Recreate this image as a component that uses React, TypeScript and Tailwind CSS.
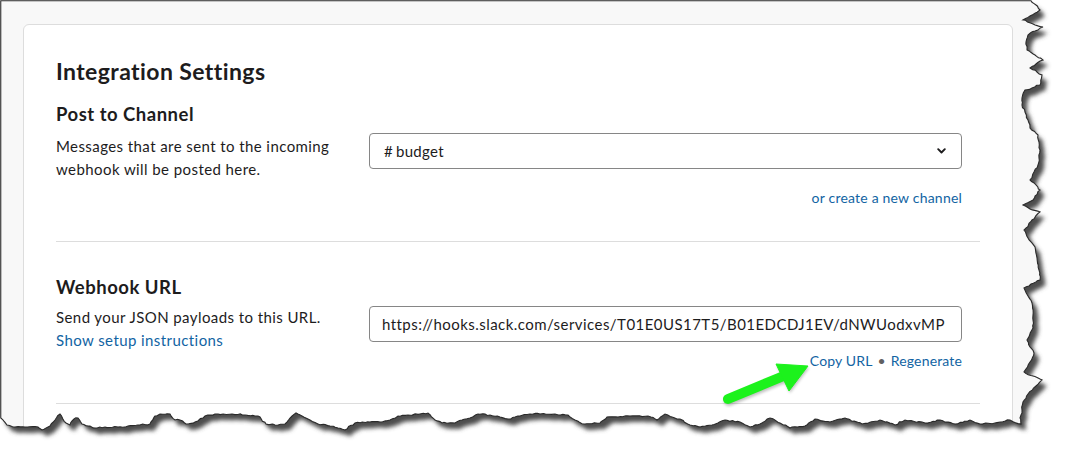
import React from 'react';

// right edge of the torn screenshot, top to bottom
const rightEdge: [number, number][] = [
  [1031, 0], [1036, 5], [1040, 10], [1030, 16], [1023, 20], [1033, 24], [1043, 27], [1035, 31],
  [1028, 35], [1026, 42], [1027, 50], [1035, 55], [1043, 60], [1036, 64], [1030, 68], [1037, 72],
  [1042, 75], [1040, 85], [1032, 88], [1025, 90], [1022, 98], [1022, 105], [1025, 112], [1028, 120],
  [1030, 128], [1038, 135], [1039, 142], [1040, 150], [1039, 158], [1038, 165], [1034, 172],
  [1030, 180], [1036, 185], [1040, 190], [1035, 196], [1033, 200], [1023, 205], [1030, 209],
  [1040, 212], [1032, 220], [1024, 230], [1028, 238], [1035, 247], [1037, 258], [1039, 270],
  [1040, 280], [1031, 284], [1024, 288], [1028, 296], [1032, 303], [1033, 315], [1033, 328],
  [1027, 340], [1030, 347], [1034, 353], [1030, 362], [1024, 372], [1033, 376], [1042, 380],
  [1036, 386], [1028, 394], [1023, 402], [1022, 410], [1020, 418], [1021, 424],
];

// bottom edge, right to left
const bottomEdge: [number, number][] = [
  [1010, 420], [995, 423], [980, 424], [970, 420], [955, 424], [940, 420], [925, 423], [905, 420],
  [895, 425], [880, 420], [862, 424], [845, 418], [830, 422], [815, 419], [805, 426], [790, 428],
  [780, 423], [770, 418], [760, 424], [750, 427], [740, 422], [725, 420], [712, 425], [700, 427],
  [690, 425], [680, 419], [672, 417], [665, 414], [657, 420], [648, 416], [630, 416], [618, 417],
  [607, 417], [600, 423], [585, 424], [575, 420], [568, 415], [555, 414], [540, 414], [530, 414],
  [520, 416], [508, 419], [500, 417], [490, 415], [478, 414], [470, 418], [462, 420], [455, 423],
  [442, 423], [435, 420], [428, 413], [420, 414], [408, 415], [398, 416], [390, 420], [380, 422],
  [370, 422], [355, 423], [345, 430], [338, 428], [330, 426], [318, 424], [310, 420], [302, 416],
  [296, 413], [290, 418], [285, 424], [275, 425], [266, 424], [260, 417], [255, 416], [245, 415],
  [232, 414], [218, 414], [210, 415], [205, 416], [195, 422], [186, 424], [180, 420], [175, 420],
  [170, 414], [160, 414], [155, 416], [150, 424], [138, 425], [128, 426], [118, 427], [105, 427],
  [95, 428], [88, 426], [82, 424], [78, 418], [74, 419], [70, 425], [66, 423], [60, 414], [55, 420],
  [50, 426], [42, 430], [38, 427], [25, 427], [15, 427], [7, 425], [1, 418],
];

function noise(n: number) {
  const s = Math.sin(n * 12.9898) * 43758.5453;
  return s - Math.floor(s) - 0.5;
}

function tornPath() {
  const all = [...rightEdge, ...bottomEdge];
  let d = `M0.75 0.75 L${all[0][0]} 0.75`;
  let k = 0;
  for (let i = 1; i < all.length; i++) {
    const [ax, ay] = all[i - 1];
    const [bx, by] = all[i];
    const steps = Math.max(1, Math.ceil(Math.hypot(bx - ax, by - ay) / 3));
    for (let s = 1; s <= steps; s++) {
      const t = s / steps;
      const j = s === steps ? 0 : 1.4;
      const x = ax + (bx - ax) * t + noise(k++) * j;
      const y = ay + (by - ay) * t + noise(k++) * j;
      d += ` L${x.toFixed(1)} ${y.toFixed(1)}`;
    }
  }
  d += ' L0.75 418 Z';
  return d;
}

const TORN = tornPath();

function TornEdge() {
  return (
    <svg className="absolute inset-0 pointer-events-none" width="1067" height="457" viewBox="0 0 1067 457">
      <defs>
        <clipPath id="outside">
          <path clipRule="evenodd" d={`M0 0 H1067 V457 H0 Z ${TORN}`} />
        </clipPath>
        <filter id="blur" x="-5%" y="-5%" width="110%" height="110%">
          <feGaussianBlur stdDeviation="2.2" />
        </filter>
      </defs>
      <path fillRule="evenodd" fill="#ffffff" d={`M0 0 H1067 V457 H0 Z ${TORN}`} />
      <g clipPath="url(#outside)">
        <path d={TORN} fill="#4d4d4d" filter="url(#blur)" transform="translate(5 6)" />
      </g>
      <path d={TORN} fill="none" stroke="#2a2a2a" strokeWidth="1.1" />
    </svg>
  );
}

function Arrow() {
  return (
    <svg className="absolute left-0 top-0 pointer-events-none" width="1067" height="457" viewBox="0 0 1067 457">
      <defs>
        <filter id="ash" x="-20%" y="-20%" width="140%" height="140%">
          <feGaussianBlur stdDeviation="1.5" />
        </filter>
      </defs>
      <g opacity="0.25" transform="translate(1 2)" filter="url(#ash)">
        <line x1="728" y1="399" x2="786" y2="375" stroke="#000" strokeWidth="10" strokeLinecap="round" />
        <polygon points="808,366 776,364 789,391" fill="#000" />
      </g>
      <line x1="728" y1="399" x2="786" y2="375" stroke="#1cf21c" strokeWidth="10" strokeLinecap="round" />
      <polygon points="808,366 776,364 789,391" fill="#1cf21c" stroke="#1cf21c" strokeWidth="1" strokeLinejoin="round" />
    </svg>
  );
}

function Section({ title, children }: { title: string; children: React.ReactNode }) {
  return (
    <div>
      <h3 className="text-[18.5px] leading-[22px] font-bold tracking-[0.5px] text-[#1d1c1d]">{title}</h3>
      {children}
    </div>
  );
}

export default function App() {
  return (
    <div className="relative w-[1067px] h-[457px] overflow-hidden bg-white font-[Lato,sans-serif] text-[#1d1c1d]">
      <div className="h-full bg-[#f8f8f8] pl-[23px] pt-[24px]">
        <div className="w-[990px] h-[500px] bg-white border border-[#dddddd] rounded-md px-[32px] pt-[33px]">
          <h2 className="text-[23px] leading-[26px] font-bold tracking-[0.4px]">Integration Settings</h2>

          <div className="mt-[19px]">
            <Section title="Post to Channel">
              <div className="mt-[8px] flex">
                <p className="w-[313px] pr-[24px] mt-[2px] text-[15px] leading-[23px] tracking-[0.42px]">
                  Messages that are sent to the incoming webhook will be posted here.
                </p>
                <div className="w-[593px]">
                  <div className="h-[36px] border border-[#868686] rounded-[4px] flex items-center justify-between pl-[14px] pr-[15px] text-[15px] tracking-[0.3px]">
                    <span>
                      <span className="mr-[3px]">#</span>budget
                    </span>
                    <svg width="9" height="6" viewBox="0 0 9 6">
                      <path d="M1.2 1.2 L4.5 4.5 L7.8 1.2" fill="none" stroke="#1d1c1d" strokeWidth="1.9" strokeLinecap="round" strokeLinejoin="round" />
                    </svg>
                  </div>
                  <div className="mt-[20px] text-right text-[14px] leading-[18px] tracking-[0.2px] text-[#1264a3]">or create a new channel</div>
                </div>
              </div>
            </Section>
          </div>

          <div className="mt-[34px] border-t border-[#dddddd]" />

          <div className="mt-[34px]">
            <Section title="Webhook URL">
              <div className="mt-[8px] flex">
                <div className="w-[313px] pr-[24px] text-[15px] leading-[23px] tracking-[0.42px]">
                  <p>Send your JSON payloads to this URL.</p>
                  <p className="text-[#1264a3]">Show setup instructions</p>
                </div>
                <div className="w-[593px]">
                  <input
                    readOnly
                    value="https://hooks.slack.com/services/T01E0US17T5/B01EDCDJ1EV/dNWUodxvMP"
                    className="w-full h-[36px] border border-[#868686] rounded-[4px] px-[12px] text-[15px] tracking-[0.45px] text-[#1d1c1d] bg-white outline-none"
                  />
                  <div className="mt-[10px] text-right text-[14px] leading-[18px] tracking-[0.15px]">
                    <span className="text-[#1264a3]">Copy URL</span>
                    <span className="text-[#616061] mx-[5px]">•</span>
                    <span className="text-[#1264a3]">Regenerate</span>
                  </div>
                </div>
              </div>
            </Section>
          </div>

          <div className="mt-[33px] border-t border-[#dddddd]" />
        </div>
      </div>
      <Arrow />
      <TornEdge />
    </div>
  );
}
